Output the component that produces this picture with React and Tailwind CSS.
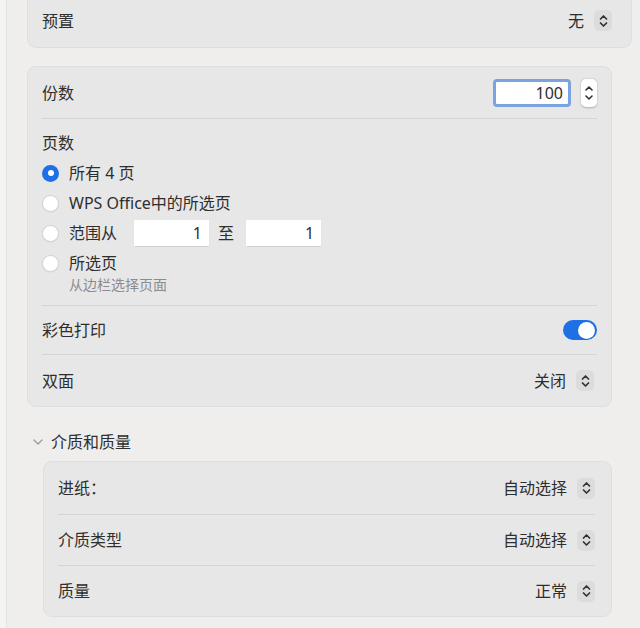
import React from 'react';

function UpDown() {
  return (
    <span className="flex h-[21px] w-[18px] items-center justify-center rounded-[5px] bg-[#dcdcdc]">
      <svg width="9" height="14" viewBox="0 0 9 14" fill="none" stroke="#333333" strokeWidth="1.7" strokeLinecap="round" strokeLinejoin="round">
        <path d="M1.5 5 L4.5 2 L7.5 5" />
        <path d="M1.5 9 L4.5 12 L7.5 9" />
      </svg>
    </span>
  );
}

function Popup({ value }) {
  return (
    <div className="flex items-center gap-[10px]">
      <span>{value}</span>
      <UpDown />
    </div>
  );
}

function Radio({ checked, children }) {
  return (
    <div className="flex h-[30px] items-center gap-[10px]">
      {checked ? (
        <span className="flex h-[17px] w-[17px] items-center justify-center rounded-full bg-[#1f6fe5]">
          <span className="h-[6px] w-[6px] rounded-full bg-white" />
        </span>
      ) : (
        <span className="h-[17px] w-[17px] rounded-full border border-[#d2d2d2] bg-white shadow-[0_0.5px_1px_rgba(0,0,0,0.08)]" />
      )}
      {children}
    </div>
  );
}

const Sep = () => <div className="h-px bg-[#d5d5d5]" />;

export default function App() {
  return (
    <div className="flex h-[628px] w-[640px] overflow-hidden bg-[#efeeed] font-['Noto_Sans','Noto_Sans_CJK_SC',sans-serif] text-[16px] leading-[20px] text-[#2e2e2e]">
      <div className="w-[7px] border-r border-[#e3e3e2] bg-[#f4f4f3]" />

      <div className="flex flex-1 flex-col pl-[20px]">
        {/* Presets */}
        <div className="flex h-[48px] w-[605px] items-center justify-between rounded-b-[9px] border border-t-0 border-[#dedede] bg-[#e7e7e7] pb-[6px] pl-[14px] pr-[19px]">
          <span>预置</span>
          <Popup value="无" />
        </div>

        {/* Copies & pages */}
        <div className="mt-[18px] flex w-[585px] flex-col rounded-[9px] border border-[#dedede] bg-[#e7e7e7] px-[14px]">
          <div className="flex h-[51px] items-center justify-between">
            <span>份数</span>
            <div className="flex items-center gap-[10px]">
              <div className="flex h-[28px] w-[78px] items-center justify-end rounded-[4px] border-[3px] border-[#7ba3e0] bg-white pr-[5px]">
                100
              </div>
              <div className="flex h-[28px] w-[16px] flex-col items-center justify-center gap-[4px] rounded-[5px] bg-white shadow-[0_0.5px_2px_rgba(0,0,0,0.25)]">
                <svg width="8" height="5" viewBox="0 0 8 5" fill="none" stroke="#333333" strokeWidth="1.6" strokeLinecap="round" strokeLinejoin="round">
                  <path d="M1 4 L4 1 L7 4" />
                </svg>
                <svg width="8" height="5" viewBox="0 0 8 5" fill="none" stroke="#333333" strokeWidth="1.6" strokeLinecap="round" strokeLinejoin="round">
                  <path d="M1 1 L4 4 L7 1" />
                </svg>
              </div>
            </div>
          </div>
          <Sep />

          <div className="flex flex-col pb-[11px] pt-[9px]">
            <div className="flex h-[30px] items-center">页数</div>
            <Radio checked>所有 4 页</Radio>
            <Radio>WPS Office中的所选页</Radio>
            <Radio>
              <span>范围从</span>
              <div className="ml-[7px] flex h-[26px] w-[75px] items-center justify-end bg-white pr-[7px] shadow-[0_0.5px_1px_rgba(0,0,0,0.1)]">1</div>
              <span className="-ml-[1px]">至</span>
              <div className="ml-[2px] flex h-[26px] w-[75px] items-center justify-end bg-white pr-[7px] shadow-[0_0.5px_1px_rgba(0,0,0,0.1)]">1</div>
            </Radio>
            <div className="-mb-[2px]">
              <Radio>所选页</Radio>
            </div>
            <div className="pl-[27px] text-[14px] leading-[18px] text-[#8c8c8c]">从边栏选择页面</div>
          </div>
          <Sep />

          <div className="flex h-[48px] items-center justify-between">
            <span>彩色打印</span>
            <div className="flex h-[20px] w-[34px] items-center justify-end rounded-full bg-[#1f6fe5] px-[2px]">
              <span className="h-[17px] w-[17px] rounded-full bg-white shadow-[0_0.5px_1px_rgba(0,0,0,0.2)]" />
            </div>
          </div>
          <Sep />

          <div className="flex h-[51px] items-center justify-between pr-[3px]">
            <span>双面</span>
            <Popup value="关闭" />
          </div>
        </div>

        {/* Media & quality */}
        <div className="mt-[21px] flex h-[28px] items-center gap-[8px] pl-[6px]">
          <svg width="10" height="6" viewBox="0 0 10 6" fill="none" stroke="#9a9a9a" strokeWidth="1.3" strokeLinecap="round" strokeLinejoin="round">
            <path d="M1 1 L5 5 L9 1" />
          </svg>
          <span>介质和质量</span>
        </div>

        <div className="ml-[16px] mt-[5px] flex w-[569px] flex-col rounded-[9px] border border-[#dedede] bg-[#e7e7e7] pl-[14px] pr-[16px]">
          <div className="flex h-[52px] items-center justify-between">
            <span>进纸：</span>
            <Popup value="自动选择" />
          </div>
          <Sep />
          <div className="flex h-[50px] items-center justify-between">
            <span>介质类型</span>
            <Popup value="自动选择" />
          </div>
          <Sep />
          <div className="flex h-[50px] items-center justify-between">
            <span>质量</span>
            <Popup value="正常" />
          </div>
        </div>
      </div>
    </div>
  );
}
